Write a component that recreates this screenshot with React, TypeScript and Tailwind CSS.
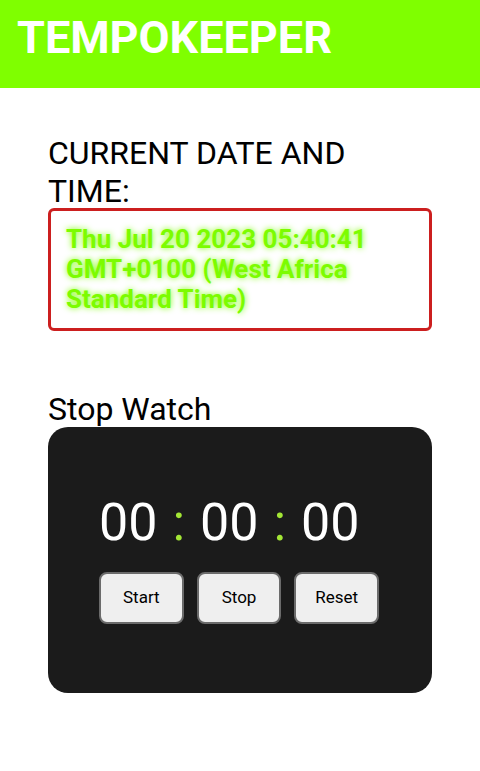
import React from 'react';

export default function App() {
  const dateText = 'Thu Jul 20 2023 05:40:41 GMT+0100 (West Africa Standard Time)';

  return (
    <div className="min-h-[771px] bg-white font-['Roboto',sans-serif]">
      {/* Header */}
      <header className="h-[88px] bg-[#7fff00] pl-[17px] pt-[10px]">
        <h1 className="text-[45px] font-bold leading-[56px] text-white">TEMPOKEEPER</h1>
      </header>

      <main className="px-[48px] pt-[46px]">
        <h2 className="max-w-[320px] text-[32px] leading-[38px] text-black">CURRENT DATE AND TIME:</h2>
        <div className="-mt-[2px] rounded-md border-[3px] border-[#cc1f1f] pl-[15px] pr-4 pt-[13px] pb-[14px]">
          <p className="text-[26px] font-bold leading-[30px] text-[#7cfc00] [text-shadow:0_0_6px_#7cfc00]">
            {dateText}
          </p>
        </div>

        <h2 className="mt-[61px] text-[32px] leading-[35px] text-black">Stop Watch</h2>
        <div className="rounded-[20px] bg-[#1b1b1b] pl-[51px] pr-[53px] pt-[65px] pb-[69px]">
          <div className="flex items-baseline text-[52px] leading-[61px] text-white">
            <span>00</span>
            <span className="mx-[15px] text-[#a3e635]">:</span>
            <span>00</span>
            <span className="mx-[15px] text-[#a3e635]">:</span>
            <span>00</span>
          </div>
          <div className="mt-[19px] flex gap-[13px]">
            {['Start', 'Stop', 'Reset'].map((label) => (
              <button
                key={label}
                className="h-[52px] w-[86px] rounded-lg border-2 border-[#6b6b6b] bg-[#efefef] text-[17px] text-black"
              >
                {label}
              </button>
            ))}
          </div>
        </div>
      </main>
    </div>
  );
}
